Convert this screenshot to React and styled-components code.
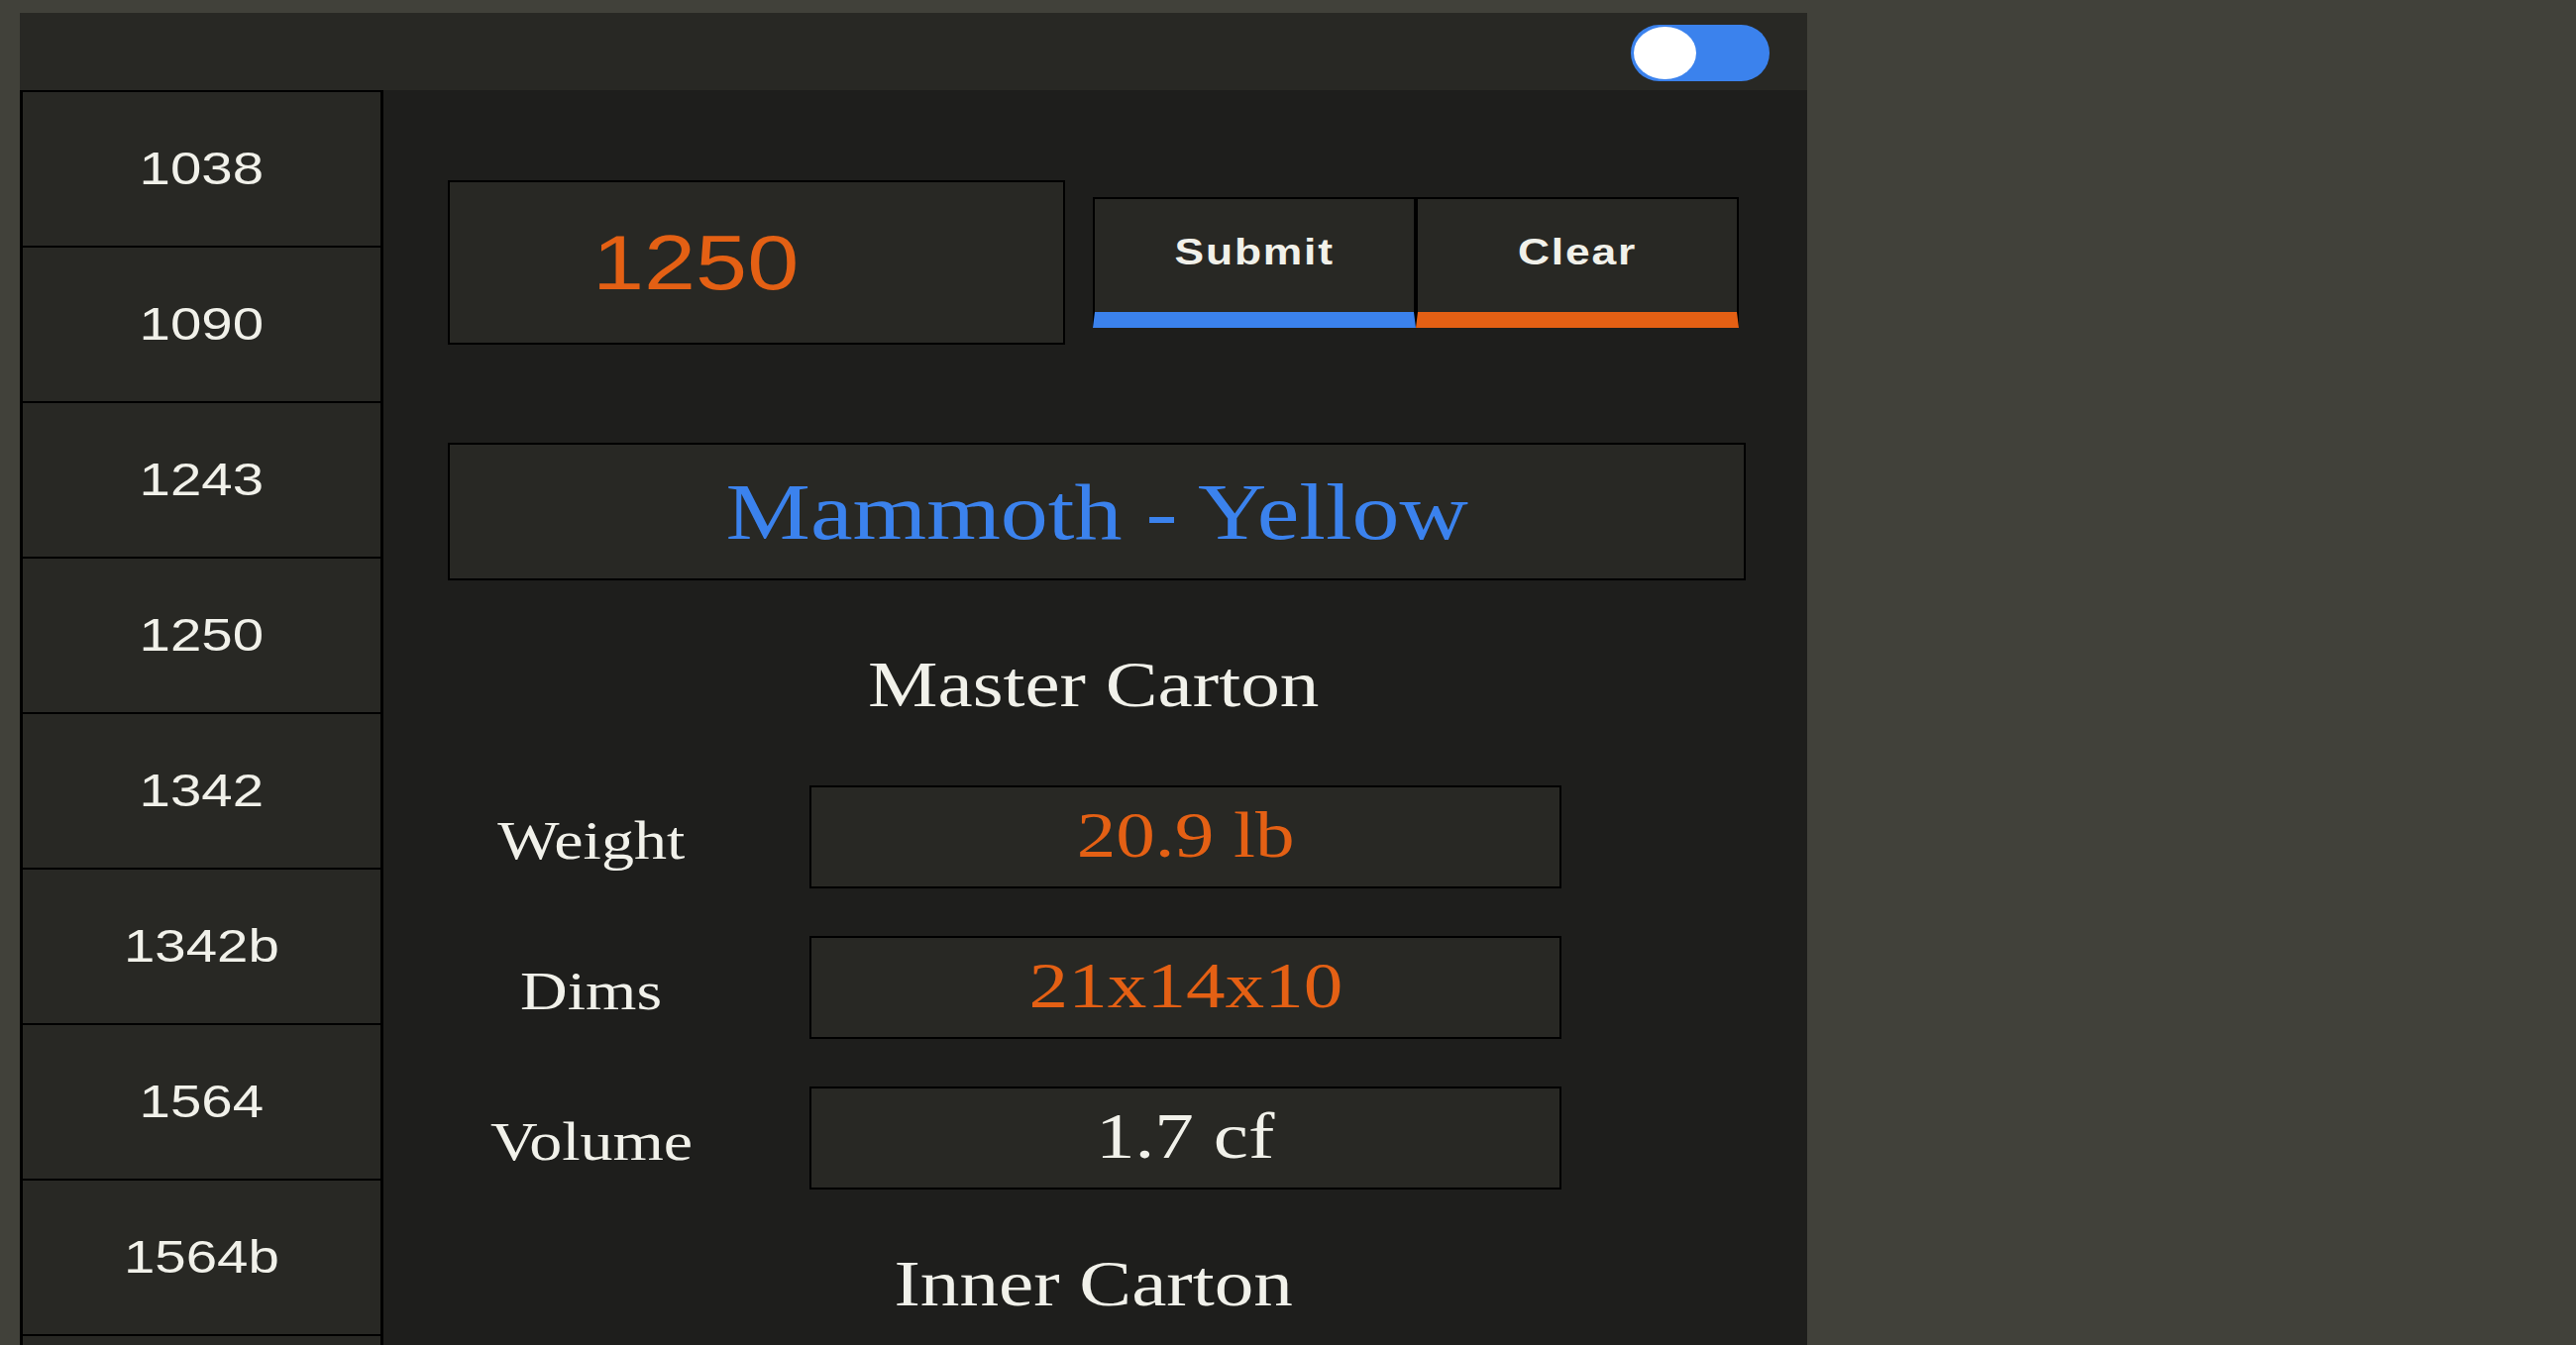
import React from "react";
import styled, { createGlobalStyle } from "styled-components";

const SANS = `"Liberation Sans", Arial, sans-serif`;
const SERIF = `"Liberation Serif", "Times New Roman", serif`;
const TEXT = "#f1f1ea";
const ORANGE = "#e46014";
const BLUE = "#3b82ed";
const PANEL = "#282824";
const DARK = "#1e1e1c";

const Global = createGlobalStyle`
  html, body { margin: 0; padding: 0; overflow: hidden; }
  body {
    background: #41413a;
    padding: 13px 0 0 20px;
    font-family: ${SANS};
  }
  * { box-sizing: border-box; }
`;

const Frame = styled.div`
  width: 1804px;
  min-height: 1420px;
  background: ${DARK};
  display: flex;
  flex-direction: column;
`;

const TopBar = styled.header`
  height: 78px;
  background: ${PANEL};
  display: flex;
  align-items: center;
  justify-content: flex-end;
  padding: 2px 38px 0 0;
`;

const Toggle = styled.div`
  width: 140px;
  height: 57px;
  border-radius: 28.5px;
  background: ${BLUE};
  display: flex;
  align-items: center;
  padding-left: 3px;
`;

const Knob = styled.span`
  width: 63px;
  height: 53px;
  border-radius: 50%;
  background: #ffffff;
`;

const Body = styled.div`
  display: flex;
  flex: 1;
`;

const Sidebar = styled.nav`
  width: 367px;
  display: flex;
  flex-direction: column;
  flex-shrink: 0;
  background: ${PANEL};
  border: solid #000;
  border-width: 0 3px;
`;

const Item = styled.div`
  height: 157px;
  border-top: 2px solid #000;
  display: flex;
  align-items: center;
  justify-content: center;
  padding-bottom: 3px;
  font-family: ${SANS};
  font-size: 47px;
  line-height: 1;
  color: ${TEXT};

  &:last-child {
    height: 159px;
    border-bottom: 2px solid #000;
  }
`;

const Stretch = styled.span`
  display: inline-block;
  white-space: nowrap;
  transform: scaleX(1.2);
  transform-origin: ${(p) => p.$origin || "center"};
`;

const Main = styled.main`
  flex: 1;
  padding: 91px 0 0 65px;
  display: flex;
  flex-direction: column;
`;

const TopRow = styled.div`
  display: flex;
  align-items: center;
  gap: 28px;
`;

const NumberField = styled.div`
  width: 623px;
  height: 166px;
  border: 2px solid #000;
  background: ${PANEL};
  display: flex;
  align-items: center;
  padding-left: 144px;
  font-family: ${SANS};
  font-size: 78px;
  line-height: 1;
  color: ${ORANGE};
`;

const ButtonGroup = styled.div`
  display: flex;
`;

const ActionButton = styled.button`
  width: 326px;
  height: 132px;
  background: ${PANEL};
  border: 2px solid #000;
  border-bottom: 16px solid ${(p) => p.$accent};
  display: flex;
  align-items: center;
  justify-content: center;
  padding: 0 0 8px 0;
  font-family: ${SANS};
  font-weight: bold;
  font-size: 37px;
  letter-spacing: 1.5px;
  line-height: 1;
  color: ${TEXT};
  cursor: pointer;
`;

const TitleBox = styled.div`
  margin-top: 99px;
  width: 1310px;
  height: 139px;
  border: 2px solid #000;
  background: ${PANEL};
  display: flex;
  align-items: center;
  justify-content: center;
  font-family: ${SERIF};
  font-size: 80px;
  line-height: 1;
  color: ${BLUE};
`;

const Heading = styled.h2`
  margin: ${(p) => p.$top}px 0 0 0;
  width: 1304px;
  text-align: center;
  font-family: ${SERIF};
  font-weight: normal;
  font-size: 66px;
  line-height: 1;
  color: ${TEXT};
`;

const Rows = styled.div`
  margin-top: 69px;
  display: flex;
  flex-direction: column;
  gap: 48px;
`;

const Row = styled.div`
  display: flex;
  align-items: center;
  height: 104px;
  gap: 75px;
`;

const Label = styled.div`
  width: 290px;
  text-align: center;
  padding-top: 7px;
  font-family: ${SERIF};
  font-size: 55px;
  line-height: 1;
  color: ${TEXT};
`;

const ValueBox = styled.div`
  width: 759px;
  height: 104px;
  border: 2px solid #000;
  background: ${PANEL};
  display: flex;
  align-items: center;
  justify-content: center;
  padding-bottom: 5px;
  font-family: ${SERIF};
  font-size: 66px;
  line-height: 1;
  color: ${(p) => (p.$accent ? ORANGE : TEXT)};
`;

const items = ["1038", "1090", "1243", "1250", "1342", "1342b", "1564", "1564b"];

const master = [
  { label: "Weight", value: "20.9 lb", accent: true },
  { label: "Dims", value: "21x14x10", accent: true },
  { label: "Volume", value: "1.7 cf", accent: false },
];

export default function App() {
  return (
    <>
      <Global />
      <Frame>
        <TopBar>
          <Toggle role="switch" aria-checked="true">
            <Knob />
          </Toggle>
        </TopBar>
        <Body>
          <Sidebar>
            {items.map((it) => (
              <Item key={it}>
                <Stretch>{it}</Stretch>
              </Item>
            ))}
          </Sidebar>
          <Main>
            <TopRow>
              <NumberField>
                <Stretch $origin="left">1250</Stretch>
              </NumberField>
              <ButtonGroup>
                <ActionButton $accent={BLUE}>
                  <Stretch>Submit</Stretch>
                </ActionButton>
                <ActionButton $accent={ORANGE}>
                  <Stretch>Clear</Stretch>
                </ActionButton>
              </ButtonGroup>
            </TopRow>
            <TitleBox>
              <Stretch>Mammoth - Yellow</Stretch>
            </TitleBox>
            <Heading $top={72}>
              <Stretch>Master Carton</Stretch>
            </Heading>
            <Rows>
              {master.map((r) => (
                <Row key={r.label}>
                  <Label>
                    <Stretch>{r.label}</Stretch>
                  </Label>
                  <ValueBox $accent={r.accent}>
                    <Stretch>{r.value}</Stretch>
                  </ValueBox>
                </Row>
              ))}
            </Rows>
            <Heading $top={62}>
              <Stretch>Inner Carton</Stretch>
            </Heading>
          </Main>
        </Body>
      </Frame>
    </>
  );
}
